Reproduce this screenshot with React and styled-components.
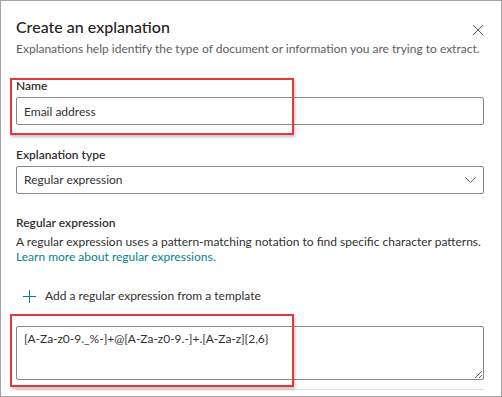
import React from "react";
import styled, { createGlobalStyle } from "styled-components";

const GlobalStyle = createGlobalStyle`
  html, body {
    margin: 0;
    padding: 0;
    background: #ffffff;
  }
  * {
    box-sizing: border-box;
  }
`;

const Frame = styled.div`
  position: relative;
  width: 502px;
  height: 397px;
  border: 1px solid #a3a3a3;
  padding: 13px 17px 0 15px;
  overflow: hidden;
  font-family: "Lato", "Noto Sans", sans-serif;
  color: #323130;
  background: #ffffff;
`;

const Header = styled.div`
  display: flex;
  justify-content: space-between;
  align-items: flex-start;
`;

const Title = styled.h1`
  margin: 0;
  font-size: 16px;
  line-height: 25px;
  font-weight: 500;
  color: #252423;
`;

const CloseButton = styled.button`
  display: flex;
  align-items: center;
  justify-content: center;
  width: 12px;
  height: 12px;
  margin-top: 10px;
  padding: 0;
  border: none;
  background: none;
  cursor: pointer;
`;

const Subtitle = styled.p`
  margin: 2px 0 0;
  font-size: 12px;
  line-height: 16px;
  color: #605e5c;
  white-space: nowrap;
`;

const Field = styled.div`
  display: flex;
  flex-direction: column;
  gap: 3px;
  margin-top: ${(p) => p.$top}px;
`;

const Label = styled.label`
  font-size: 12px;
  line-height: 16px;
  font-weight: 600;
  color: #323130;
`;

const TextInput = styled.input`
  height: 28px;
  width: 100%;
  padding: 0 7px;
  border: 1px solid #8a8886;
  border-radius: 2px;
  font-family: inherit;
  font-size: 12px;
  line-height: 26px;
  color: #323130;
  outline: none;
`;

const Dropdown = styled.div`
  display: flex;
  align-items: center;
  justify-content: space-between;
  height: 28px;
  padding: 0 7px;
  border: 1px solid #8a8886;
  border-radius: 2px;
  font-size: 12px;
  line-height: 16px;
  color: #323130;
`;

const Description = styled.p`
  margin: 0;
  font-size: 12px;
  line-height: 15px;
  color: #323130;
`;

const Link = styled.a`
  color: #038387;
  text-decoration: none;
`;

const AddButton = styled.button`
  display: flex;
  align-items: center;
  gap: 9px;
  height: 28px;
  margin-top: 18px;
  padding: 0 0 0 7px;
  border: none;
  background: none;
  font-family: inherit;
  font-size: 12px;
  line-height: 16px;
  color: #323130;
  cursor: pointer;
`;

const Pattern = styled.textarea`
  display: block;
  width: 100%;
  height: 54px;
  margin-top: 16px;
  padding: 4px 7px;
  border: 1px solid #8a8886;
  border-radius: 2px;
  font-family: inherit;
  font-size: 12px;
  line-height: 16px;
  color: #323130;
  outline: none;
`;

const Divider = styled.div`
  height: 1px;
  margin-top: 9px;
  background: #e1dfdd;
`;

const Highlight = styled.div`
  position: absolute;
  left: ${(p) => p.$left}px;
  top: ${(p) => p.$top}px;
  width: ${(p) => p.$width}px;
  height: ${(p) => p.$height}px;
  border: 2px solid #e5373d;
  box-shadow: 1px 2px 3px rgba(0, 0, 0, 0.25);
  pointer-events: none;
`;

const closeIcon = (
  <svg width="12" height="12" viewBox="0 0 12 12">
    <path d="M1 1L11 11M11 1L1 11" stroke="#605e5c" strokeWidth="1" fill="none" />
  </svg>
);

const chevronIcon = (
  <svg width="11" height="6" viewBox="0 0 11 6">
    <path d="M0.5 0.5L5.5 5.5L10.5 0.5" stroke="#605e5c" strokeWidth="1" fill="none" />
  </svg>
);

const plusIcon = (
  <svg width="13" height="13" viewBox="0 0 13 13">
    <path d="M6.5 0V13M0 6.5H13" stroke="#038387" strokeWidth="1" fill="none" />
  </svg>
);

const App = () => {
  return (
    <Frame>
      <GlobalStyle />
      <Header>
        <Title>Create an explanation</Title>
        <CloseButton aria-label="Close">{closeIcon}</CloseButton>
      </Header>
      <Subtitle>
        Explanations help identify the type of document or information you are
        trying to extract.
      </Subtitle>

      <Field $top={21}>
        <Label>Name</Label>
        <TextInput defaultValue="Email address" />
      </Field>

      <Field $top={22}>
        <Label>Explanation type</Label>
        <Dropdown>
          <span>Regular expression</span>
          {chevronIcon}
        </Dropdown>
      </Field>

      <Field $top={21}>
        <Label>Regular expression</Label>
        <Description>
          A regular expression uses a pattern-matching notation to find specific
          character patterns.
          <br />
          <Link href="#">Learn more about regular expressions.</Link>
        </Description>
      </Field>

      <AddButton>
        {plusIcon}
        Add a regular expression from a template
      </AddButton>

      <Pattern defaultValue="[A-Za-z0-9._%-]+@[A-Za-z0-9.-]+.[A-Za-z]{2,6}" />
      <Divider />

      <Highlight $left={9} $top={77} $width={284} $height={57} />
      <Highlight $left={9} $top={313} $width={284} $height={73} />
    </Frame>
  );
};

export default App;
